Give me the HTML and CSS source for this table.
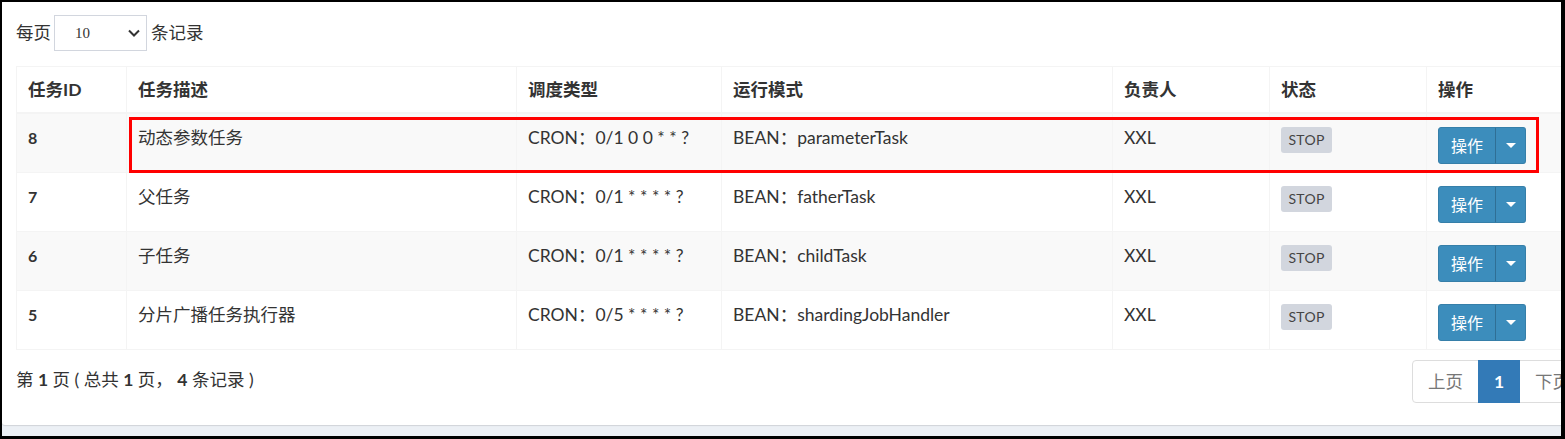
FILE: index.html
```html
<!DOCTYPE html>
<html lang="zh-CN">
<head>
<meta charset="utf-8">
<title>任务列表</title>
<link rel="stylesheet" href="styles.css">
</head>
<body>
<div class="frame">
  <div class="box">
    <div class="length-bar">
      <span class="length-label">每页</span>
      <div class="select">
        <span class="select-value">10</span>
        <svg class="chevron" width="12" height="8" viewBox="0 0 12 8"><path d="M1 1.5 L6 6.5 L11 1.5" fill="none" stroke="#333" stroke-width="2"/></svg>
      </div>
      <span class="length-label">条记录</span>
    </div>

    <table class="job-table">
      <colgroup>
        <col class="c-id"><col class="c-desc"><col class="c-type"><col class="c-mode"><col class="c-owner"><col class="c-status"><col class="c-op">
      </colgroup>
      <thead>
        <tr><th>任务ID</th><th>任务描述</th><th>调度类型</th><th>运行模式</th><th>负责人</th><th>状态</th><th>操作</th></tr>
      </thead>
      <tbody>
        <tr class="odd">
          <td class="id">8</td><td>动态参数任务</td><td>CRON：0/1 0 0 * * ?</td><td>BEAN：parameterTask</td><td>XXL</td>
          <td><span class="label">STOP</span></td>
          <td><div class="btn-group"><span class="btn-main">操作</span><span class="btn-caret"><i class="caret"></i></span></div></td>
        </tr>
        <tr>
          <td class="id">7</td><td>父任务</td><td>CRON：0/1 * * * * ?</td><td>BEAN：fatherTask</td><td>XXL</td>
          <td><span class="label">STOP</span></td>
          <td><div class="btn-group"><span class="btn-main">操作</span><span class="btn-caret"><i class="caret"></i></span></div></td>
        </tr>
        <tr class="odd">
          <td class="id">6</td><td>子任务</td><td>CRON：0/1 * * * * ?</td><td>BEAN：childTask</td><td>XXL</td>
          <td><span class="label">STOP</span></td>
          <td><div class="btn-group"><span class="btn-main">操作</span><span class="btn-caret"><i class="caret"></i></span></div></td>
        </tr>
        <tr>
          <td class="id">5</td><td>分片广播任务执行器</td><td>CRON：0/5 * * * * ?</td><td>BEAN：shardingJobHandler</td><td>XXL</td>
          <td><span class="label">STOP</span></td>
          <td><div class="btn-group"><span class="btn-main">操作</span><span class="btn-caret"><i class="caret"></i></span></div></td>
        </tr>
      </tbody>
    </table>

    <div class="footer-bar">
      <div class="info">第 <b>1</b> 页 ( 总共 <b>1</b> 页， <b>4</b> 条记录 )</div>
      <ul class="pagination">
        <li class="disabled">上页</li>
        <li class="active">1</li>
        <li class="disabled">下页</li>
      </ul>
    </div>
  </div>
  <div class="highlight"></div>
</div>
</body>
</html>
```

FILE: styles.css
```css
html, body {
  margin: 0;
  padding: 0;
  background: #000;
}

.frame {
  position: relative;
  width: 1565px;
  height: 439px;
  box-sizing: border-box;
  border-style: solid;
  border-color: #000;
  border-width: 2px 4px 3px 2px;
  background: #ecf0f5;
  overflow: hidden;
  font-family: "Lato", "Noto Sans CJK SC", sans-serif;
  font-size: 17.5px;
  line-height: 25px;
  color: #333;
}

.box {
  width: 1598px;
  box-sizing: border-box;
  background: #fff;
  padding: 13px 14px 22px;
  border-radius: 0 0 3px 3px;
  box-shadow: 0 1px 1px rgba(0, 0, 0, 0.12);
}

.length-bar {
  display: flex;
  align-items: center;
  height: 36px;
}

.length-label {
  font-size: 17.5px;
  color: #333;
  margin-top: -2px;
}

.select {
  display: flex;
  align-items: center;
  justify-content: space-between;
  width: 93px;
  height: 36px;
  box-sizing: border-box;
  margin: 0 4px 0 3px;
  padding: 0 6px 0 20px;
  border: 1px solid #d2d6de;
  background: #fff;
}

.select-value {
  font-family: "Liberation Serif", serif;
  font-size: 15px;
  color: #333;
}

.chevron {
  display: block;
}

.job-table {
  margin-top: 15px;
  width: 1568px;
  table-layout: fixed;
  border-collapse: collapse;
  border: 1px solid #f4f4f4;
}

.c-id { width: 110px; }
.c-desc { width: 390px; }
.c-type { width: 205px; }
.c-mode { width: 391px; }
.c-owner { width: 157px; }
.c-status { width: 157px; }
.c-op { width: 158px; }

.job-table th,
.job-table td {
  border: 1px solid #f4f4f4;
  text-align: left;
  vertical-align: top;
  padding: 10px 11px;
  white-space: nowrap;
  overflow: hidden;
}

.job-table th {
  font-weight: 700;
  border-bottom-width: 2px;
  height: 45px;
  box-sizing: border-box;
  padding-top: 10px;
}

.job-table td {
  height: 59px;
  box-sizing: border-box;
  padding-top: 11px;
  padding-bottom: 0;
  font-weight: 400;
}

.job-table td.id {
  font-weight: 700;
  font-size: 16px;
}

.job-table tr.odd td {
  background: #f9f9f9;
}

.label {
  display: inline-block;
  margin-top: 2px;
  width: 51px;
  height: 26px;
  line-height: 26px;
  text-align: center;
  background: #d2d6de;
  color: #444;
  font-size: 14px;
  font-weight: 400;
  border-radius: 3px;
  letter-spacing: 0.3px;
}

.btn-group {
  display: inline-flex;
  margin-top: 2px;
  height: 37px;
}

.btn-main,
.btn-caret {
  display: flex;
  align-items: center;
  justify-content: center;
  background: #3c8dbc;
  border: 1px solid #367fa9;
  color: #fff;
  box-sizing: border-box;
  height: 37px;
}

.btn-main {
  width: 58px;
  font-size: 16px;
  border-radius: 3px 0 0 3px;
}

.btn-caret {
  width: 31px;
  border-left: 1px solid #2f6f95;
  border-radius: 0 3px 3px 0;
  margin-left: -1px;
}

.caret {
  display: block;
  width: 0;
  height: 0;
  border-top: 5px solid #fff;
  border-left: 5px solid transparent;
  border-right: 5px solid transparent;
}

.footer-bar {
  display: flex;
  justify-content: space-between;
  align-items: flex-start;
  margin-top: 10px;
}

.info {
  margin-top: 7px;
  font-size: 17.5px;
  color: #333;
}

.info b {
  font-weight: 700;
  font-family: "Lato", sans-serif;
}

.pagination {
  display: flex;
  list-style: none;
  margin: 0;
  padding: 0;
}

.pagination li {
  display: block;
  height: 43px;
  box-sizing: border-box;
  padding: 8px 15px;
  border: 1px solid #ddd;
  margin-left: -1px;
  font-size: 17.5px;
  line-height: 25px;
  background: #fff;
  white-space: nowrap;
}

.pagination li.disabled {
  color: #777;
  width: 67px;
}

.pagination li:first-child {
  margin-left: 0;
  border-radius: 4px 0 0 4px;
}

.pagination li.active {
  background: #337ab7;
  border-color: #337ab7;
  color: #fff;
  font-weight: 700;
  width: 42px;
  text-align: center;
  position: relative;
  z-index: 1;
}

.highlight {
  position: absolute;
  left: 127px;
  top: 115px;
  width: 1410px;
  height: 56px;
  box-sizing: border-box;
  border: 3px solid #ff0000;
  pointer-events: none;
}
```
